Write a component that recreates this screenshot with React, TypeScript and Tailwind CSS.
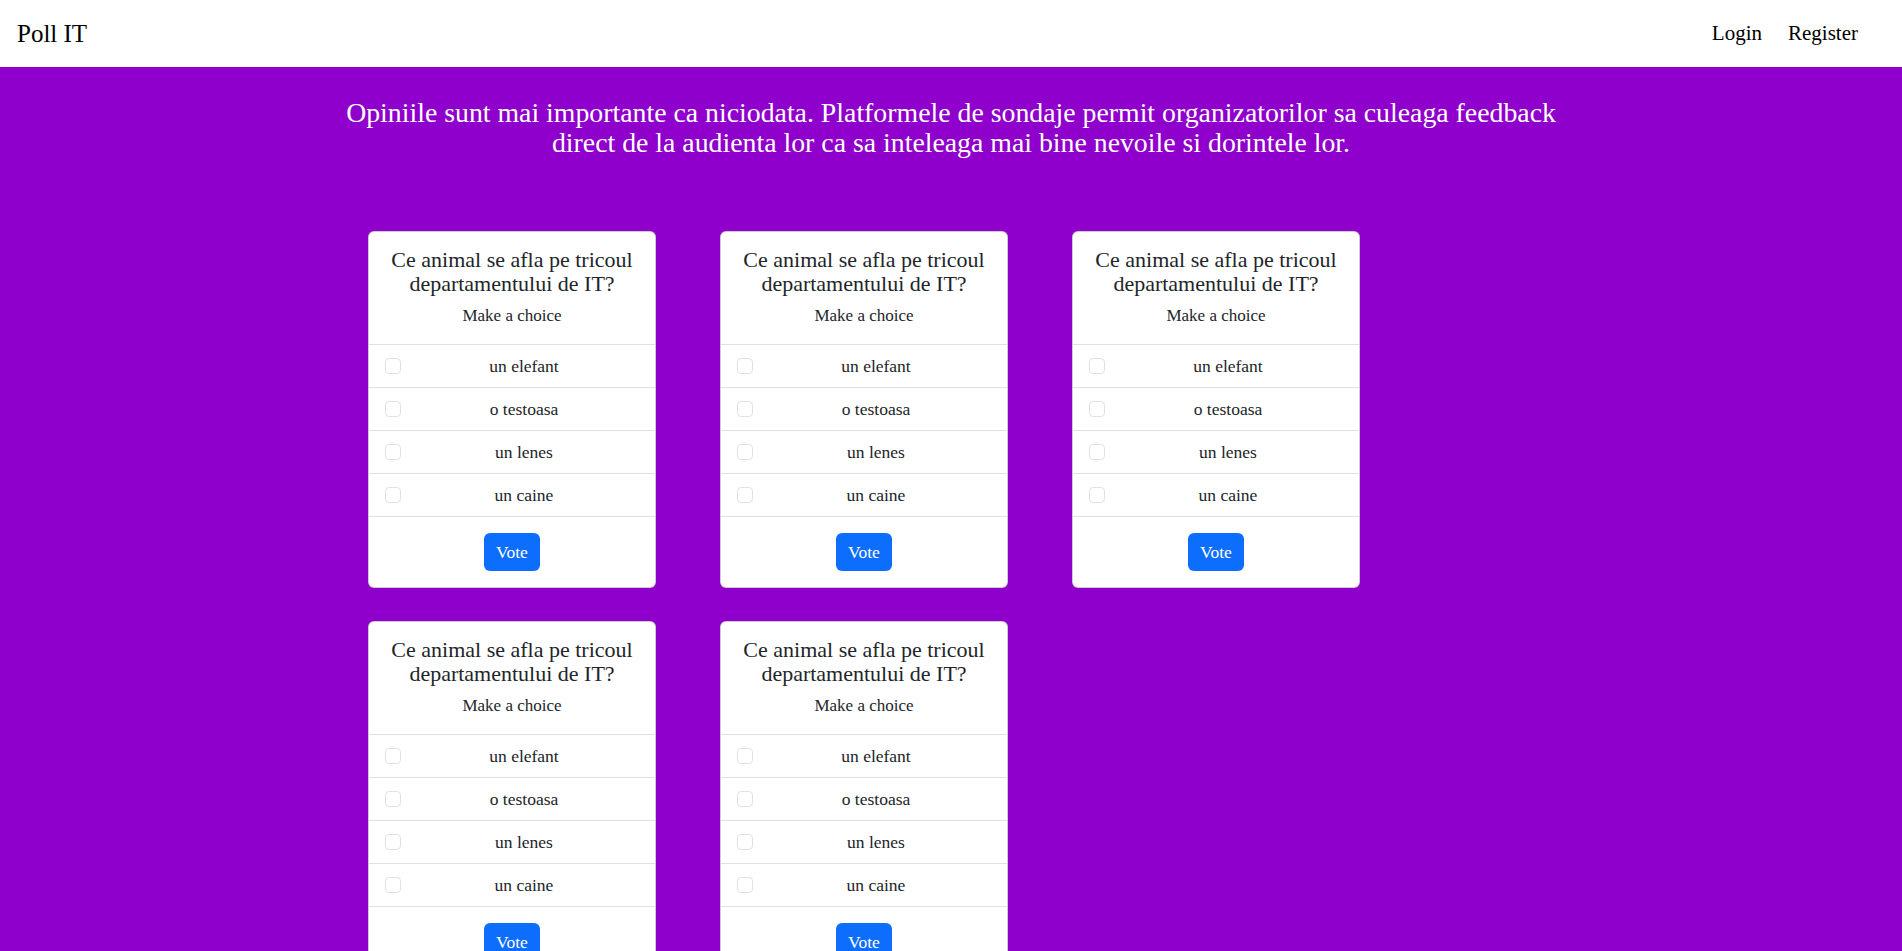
import { useState } from "react";

const options = ["un elefant", "o testoasa", "un lenes", "un caine"];

function PollCard() {
    const [checked, setChecked] = useState<number[]>([]);
    const toggle = (i: number) =>
        setChecked((c) => (c.includes(i) ? c.filter((x) => x !== i) : [...c, i]));

    return (
        <div className="w-[288px] bg-white rounded-[6px] border border-black/20 overflow-hidden text-[#212529]">
            <div className="px-4 pt-4 pb-4 text-center">
                <h5 className="text-[22px] leading-[24px]">Ce animal se afla pe tricoul departamentului de IT?</h5>
                <p className="mt-2 text-[17px] leading-[24px]">Make a choice</p>
            </div>
            {options.map((opt, i) => (
                <label
                    key={opt}
                    className="flex items-center h-[43px] px-4 border-t border-[#dee2e6] cursor-pointer"
                >
                    <input
                        type="checkbox"
                        checked={checked.includes(i)}
                        onChange={() => toggle(i)}
                        className="appearance-none w-4 h-4 rounded-[4px] border border-[#dee2e6] checked:bg-[#0d6efd] checked:border-[#0d6efd]"
                    />
                    <span className="flex-1 ml-2 text-center text-[17.5px]">{opt}</span>
                </label>
            ))}
            <div className="border-t border-[#dee2e6] p-4 flex justify-center">
                <button className="h-[38px] px-3 rounded-[6px] bg-[#0d6efd] text-white text-[17.5px]">Vote</button>
            </div>
        </div>
    );
}

export default function App() {
    return (
        <div className="min-h-screen bg-[#8f00cc] font-['Liberation_Serif',serif]">
            <nav className="h-[67px] bg-white flex items-center justify-between pl-[17px] pr-[44px]">
                <span className="text-[25px] text-black">Poll IT</span>
                <div className="flex gap-[26px] text-[21px] text-black">
                    <a href="#">Login</a>
                    <a href="#">Register</a>
                </div>
            </nav>
            <p className="mt-[31px] text-center text-white text-[27.8px] leading-[30px]">
                Opiniile sunt mai importante ca niciodata. Platformele de sondaje permit organizatorilor sa culeaga feedback
                <br />
                direct de la audienta lor ca sa inteleaga mai bine nevoile si dorintele lor.
            </p>
            <div className="ml-[368px] mt-[73px] w-[1060px] flex flex-wrap gap-x-16 gap-y-[33px] pb-8">
                {[0, 1, 2, 3, 4].map((k) => (
                    <PollCard key={k} />
                ))}
            </div>
        </div>
    );
}
